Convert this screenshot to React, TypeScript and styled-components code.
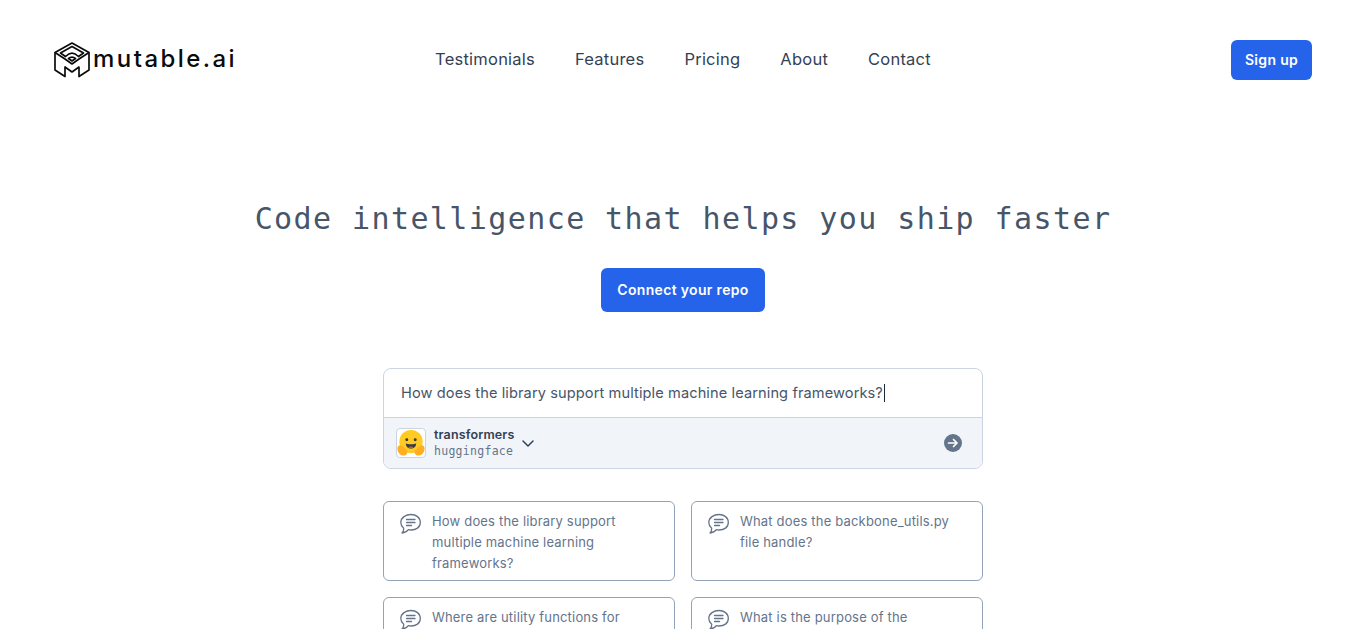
import * as React from "react";
import styled, { createGlobalStyle } from "styled-components";

const GlobalStyle = createGlobalStyle`
  html, body {
    margin: 0;
    padding: 0;
    height: 100%;
    overflow: hidden;
    background: #fff;
  }
  * { box-sizing: border-box; }
`;

const sans = `"Inter", "Open Sans", "Liberation Sans", sans-serif`;
const mono = `"DejaVu Sans Mono", "Liberation Mono", monospace`;

const Page = styled.div`
  height: 629px;
  overflow: hidden;
  font-family: ${sans};
`;

const Header = styled.header`
  display: grid;
  grid-template-columns: 1fr auto 1fr;
  align-items: center;
  padding: 40px 54px 0;
  height: 80px;
`;

const LogoLink = styled.a`
  display: flex;
  align-items: center;
  gap: 3px;
  color: #0b0b0b;
  font-size: 24px;
  font-weight: 500;
  line-height: 28px;
  letter-spacing: 2.45px;
  text-decoration: none;
`;

const LogoText = styled.span`
  padding-bottom: 2px;
`;

const Nav = styled.nav`
  display: flex;
  gap: 40px;
  padding-bottom: 2px;
`;

const NavLink = styled.a`
  color: #334155;
  font-size: 16.5px;
  line-height: 24px;
  letter-spacing: 0.23px;
  text-decoration: none;
`;

const HeaderRight = styled.div`
  display: flex;
  justify-content: flex-end;
`;

const PrimaryButton = styled.a<{ $large?: boolean }>`
  display: inline-flex;
  align-items: center;
  justify-content: center;
  height: ${({ $large }) => ($large ? "44px" : "40px")};
  width: ${({ $large }) => ($large ? "164px" : "81px")};
  padding-bottom: 1px;
  border-radius: 6px;
  background: #2563eb;
  color: #fff;
  font-size: 14px;
  font-weight: 600;
  letter-spacing: 0.33px;
  text-decoration: none;
`;

const Hero = styled.section`
  display: flex;
  flex-direction: column;
  align-items: center;
  padding-top: 118px;
`;

const Title = styled.h1`
  margin: 0;
  height: 42px;
  color: #475569;
  font-family: ${mono};
  font-size: 30px;
  font-weight: 400;
  line-height: 42px;
  letter-spacing: 1.41px;
  white-space: nowrap;
`;

const CtaRow = styled.div`
  margin-top: 28px;
`;

const SearchBox = styled.div`
  margin-top: 56px;
  width: 600px;
  height: 101px;
  border: 1px solid #cbd5e1;
  border-radius: 8px;
  overflow: hidden;
  display: flex;
  flex-direction: column;
`;

const QueryRow = styled.div`
  height: 48px;
  padding: 0 17px;
  display: flex;
  align-items: center;
  color: #475569;
  font-size: 14.6px;
  letter-spacing: 0.1px;
`;

const Caret = styled.span`
  display: inline-block;
  width: 1px;
  height: 18px;
  background: #1e293b;
  margin-left: 1px;
`;

const RepoRow = styled.div`
  flex: 1;
  border-top: 1px solid #cbd5e1;
  background: #f1f5f9;
  display: flex;
  align-items: center;
  padding: 0 19px 0 12px;
`;

const Avatar = styled.div`
  width: 30px;
  height: 30px;
  border: 1px solid #cbd5e1;
  border-radius: 4px;
  background: #fff;
  display: flex;
  align-items: center;
  justify-content: center;
  flex: none;
`;

const RepoText = styled.div`
  margin-left: 8px;
  display: flex;
  flex-direction: column;
`;

const RepoName = styled.span`
  color: #334155;
  font-size: 12.5px;
  font-weight: 600;
  line-height: 16px;
  letter-spacing: 0.15px;
`;

const RepoOwner = styled.span`
  color: #64748b;
  font-family: ${mono};
  font-size: 11.5px;
  line-height: 16px;
  letter-spacing: 0.28px;
`;

const Chevron = styled.svg`
  margin-left: 6px;
  color: #334155;
`;

const GoIcon = styled.svg`
  margin-left: auto;
  color: #64748b;
`;

const CardGrid = styled.div`
  margin-top: 32px;
  width: 600px;
  display: grid;
  grid-template-columns: 1fr 1fr;
  gap: 16px;
`;

const Card = styled.div`
  height: 80px;
  border: 1px solid #94a3b8;
  border-radius: 6px;
  padding: 9px 16px 0;
  display: flex;
  gap: 11px;
`;

const CardIcon = styled.svg`
  flex: none;
  margin-top: 2px;
  color: #64748b;
`;

const CardText = styled.p`
  margin: 0;
  color: #64748b;
  font-size: 13px;
  line-height: 21px;
  letter-spacing: 0.18px;
`;

const Cube = () => (
  <svg width="36" height="36" viewBox="3 2 36 36" fill="none" stroke="#0b0b0b" strokeWidth="1.7" strokeLinejoin="round">
    <path d="M21 3 38 12.500V30L28 36.500V27L21 32 14 27V36.500L4 30V12.500Z" />
    <path d="M4 12.500 14 19 21 24 28 19 38 12.500" />
    <path d="M9.500 13 21 6.500 32.500 13 27.500 16.500C23 12 19 12 14.500 16.500Z" />
    <path d="M17.500 18.500C19.500 17 22.500 17 24.500 18.500L21 21Z" />
  </svg>
);

const HuggingFace = () => (
  <svg width="30" height="28" viewBox="0 0 30 28">
    <circle cx="15" cy="12.500" r="12.500" fill="#ffca22" />
    <circle cx="10.500" cy="10.500" r="1.600" fill="#3a3b45" />
    <circle cx="19.500" cy="10.500" r="1.600" fill="#3a3b45" />
    <path d="M9.500 14.500c1.600 1 9.400 1 11 0 0 3.500-2.400 5.500-5.500 5.500S9.500 18 9.500 14.500Z" fill="#3a3b45" />
    <path d="M12 18.500c1.500-1 4.500-1 6 0-1.500 1.200-4.500 1.200-6 0Z" fill="#f94040" />
    <path d="M.500 21c-.500-2.500 1-4.500 3-4.500 1.500 0 6 4 7.500 6 1 2-1 5-4 5-3.500 0-6-3-6.500-6.500Z" fill="#ffae22" />
    <path d="M29.500 21c.500-2.500-1-4.500-3-4.500-1.500 0-6 4-7.500 6-1 2 1 5 4 5 3.500 0 6-3 6.500-6.500Z" fill="#ffae22" />
  </svg>
);

const ChatIcon = () => (
  <CardIcon width="21" height="21" viewBox="0 0 21 21" fill="none" stroke="currentColor" strokeWidth="1.3" strokeLinecap="round" strokeLinejoin="round">
    <path d="M11 1.500C16 1.500 20.300 4.500 20.300 9.500S16 17 11 17c-.900 0-1.800-.100-2.600-.300C7 18.500 4.500 19.800 2 20c1.200-1.200 1.800-2.800 1.700-4.700C1.900 13.800.800 11.800.800 9.500.800 4.500 6 1.500 11 1.500Z" />
    <path d="M6.500 6.500h8.500M6.500 9.500h8.500M6.500 12.500h5" />
  </CardIcon>
);

const questions = [
  "How does the library support multiple machine learning frameworks?",
  "What does the backbone_utils.py file handle?",
  "Where are utility functions for tokenization defined?",
  "What is the purpose of the configuration_utils.py file?",
];

export default function App() {
  return (
    <Page>
      <GlobalStyle />
      <Header>
        <LogoLink href="#">
          <Cube />
          <LogoText>mutable.ai</LogoText>
        </LogoLink>
        <Nav>
          <NavLink href="#">Testimonials</NavLink>
          <NavLink href="#">Features</NavLink>
          <NavLink href="#">Pricing</NavLink>
          <NavLink href="#">About</NavLink>
          <NavLink href="#">Contact</NavLink>
        </Nav>
        <HeaderRight>
          <PrimaryButton href="#">Sign up</PrimaryButton>
        </HeaderRight>
      </Header>
      <Hero>
        <Title>Code intelligence that helps you ship faster</Title>
        <CtaRow>
          <PrimaryButton href="#" $large>
            Connect your repo
          </PrimaryButton>
        </CtaRow>
        <SearchBox>
          <QueryRow>
            How does the library support multiple machine learning frameworks?
            <Caret />
          </QueryRow>
          <RepoRow>
            <Avatar>
              <HuggingFace />
            </Avatar>
            <RepoText>
              <RepoName>transformers</RepoName>
              <RepoOwner>huggingface</RepoOwner>
            </RepoText>
            <Chevron width="16" height="16" viewBox="0 0 16 16" fill="none" stroke="currentColor" strokeWidth="1.5" strokeLinecap="round" strokeLinejoin="round">
              <path d="M3 6l5 5 5-5" />
            </Chevron>
            <GoIcon width="20" height="20" viewBox="0 0 20 20">
              <circle cx="10" cy="10" r="9" fill="currentColor" />
              <path d="M5.500 10h8.500M10.500 6.500 14 10l-3.500 3.500" fill="none" stroke="#fff" strokeWidth="1.700" strokeLinecap="round" strokeLinejoin="round" />
            </GoIcon>
          </RepoRow>
        </SearchBox>
        <CardGrid>
          {questions.map((q) => (
            <Card key={q}>
              <ChatIcon />
              <CardText>{q}</CardText>
            </Card>
          ))}
        </CardGrid>
      </Hero>
    </Page>
  );
}
